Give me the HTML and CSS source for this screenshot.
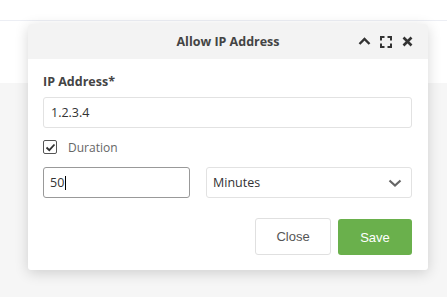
FILE: index.html
```html
<!DOCTYPE html>
<html>
<head>
<meta charset="utf-8">
<link rel="stylesheet" href="styles.css">
</head>
<body>
<div class="page">
  <div class="topbar"></div>
  <div class="band"></div>
  <div class="main"></div>
</div>
<div class="modal">
  <div class="modal-header">
    <div class="modal-title">Allow IP Address</div>
    <div class="modal-tools">
      <svg class="tool-up" width="13" height="13" viewBox="0 0 13 13"><path d="M1.5 9 L6.5 4 L11.5 9" fill="none" stroke="#333" stroke-width="2.4"/></svg>
      <svg class="tool-max" width="12" height="12" viewBox="0 0 12 12"><path d="M1 4.5 V1 H4.5 M7.5 1 H11 V4.5 M11 7.5 V11 H7.5 M4.5 11 H1 V7.5" fill="none" stroke="#333" stroke-width="2"/></svg>
      <svg width="11" height="11" viewBox="0 0 11 11"><path d="M1.5 1.5 L9.5 9.5 M9.5 1.5 L1.5 9.5" fill="none" stroke="#333" stroke-width="2.6"/></svg>
    </div>
  </div>
  <div class="modal-body">
    <div class="field-label">IP Address*</div>
    <div class="input">1.2.3.4</div>
    <div class="check-row">
      <span class="checkbox">
        <svg width="11" height="11" viewBox="0 0 11 11"><path d="M1.5 5.5 L4.3 8.2 L9.5 2.5" fill="none" stroke="#333" stroke-width="1.8"/></svg>
      </span>
      <span class="check-label">Duration</span>
    </div>
    <div class="duration-row">
      <div class="input focused">50<span class="caret"></span></div>
      <div class="input select">
        <span>Minutes</span>
        <svg width="14" height="10" viewBox="0 0 14 10"><path d="M1.5 2.5 L7 7.5 L12.5 2.5" fill="none" stroke="#666" stroke-width="2.2"/></svg>
      </div>
    </div>
    <div class="actions">
      <button class="btn btn-close">Close</button>
      <button class="btn btn-save">Save</button>
    </div>
  </div>
</div>
</body>
</html>
```

FILE: styles.css
```css
html, body {
  margin: 0;
  padding: 0;
  width: 447px;
  height: 297px;
  overflow: hidden;
  font-family: "Open Sans", "Noto Sans", sans-serif;
}
.page {
  display: flex;
  flex-direction: column;
  height: 297px;
}
.topbar {
  height: 20px;
  background: #ffffff;
  border-bottom: 1px solid #eceef4;
}
.band {
  height: 62px;
  background: #ffffff;
}
.main {
  flex: 1;
  background: #f6f6f6;
}
.modal {
  position: absolute;
  left: 28px;
  top: 24px;
  width: 400px;
  background: #ffffff;
  border-radius: 3px;
  box-shadow: 0 3px 14px rgba(0,0,0,0.16);
  overflow: hidden;
}
.modal-header {
  height: 35px;
  background: #f3f3f3;
  position: relative;
  display: flex;
  align-items: center;
  justify-content: center;
}
.modal-title {
  font-size: 12.5px;
  font-weight: 700;
  color: #444;
}
.modal-tools {
  position: absolute;
  right: 15px;
  top: 11px;
  display: flex;
  align-items: center;
}
.tool-up {
  margin-right: 9px;
}
.tool-max {
  margin-right: 10px;
}
.modal-body {
  padding: 14px 16px 15px 15px;
}
.field-label {
  font-size: 12.5px;
  font-weight: 700;
  color: #444;
  line-height: 18px;
  height: 18px;
}
.input {
  box-sizing: border-box;
  height: 31px;
  border: 1px solid #e2e2e2;
  border-radius: 3px;
  padding: 0 7px;
  display: flex;
  align-items: center;
  font-size: 12.5px;
  color: #333;
  margin-top: 6px;
}
.check-row {
  display: flex;
  align-items: center;
  margin-top: 12px;
  height: 14px;
}
.checkbox {
  box-sizing: border-box;
  width: 14px;
  height: 14px;
  border: 1.5px solid #555;
  border-radius: 2px;
  display: flex;
  align-items: center;
  justify-content: center;
}
.check-label {
  margin-left: 11px;
  font-size: 12px;
  color: #666;
}
.duration-row {
  display: flex;
  gap: 16px;
  margin-top: 7px;
}
.duration-row .input {
  margin-top: 6px;
}
.focused {
  width: 147px;
  border-color: #999;
  padding-left: 6px;
}
.caret {
  display: inline-block;
  width: 1px;
  height: 14px;
  background: #000;
  margin-left: 1px;
}
.select {
  flex: 1;
  justify-content: space-between;
  padding-left: 6px;
  padding-right: 9px;
}
.actions {
  display: flex;
  justify-content: flex-end;
  gap: 7px;
  margin-top: 20px;
}
.btn {
  box-sizing: border-box;
  height: 37px;
  border-radius: 3px;
  font-family: "Liberation Sans", Arial, sans-serif;
  font-size: 13px;
  padding: 0;
}
.btn-close {
  width: 76px;
  background: #fff;
  border: 1px solid #e0e0e0;
  color: #555;
}
.btn-save {
  width: 74px;
  height: 36px;
  margin-top: 1px;
  background: #6ab04c;
  border: none;
  color: #fff;
}
```
